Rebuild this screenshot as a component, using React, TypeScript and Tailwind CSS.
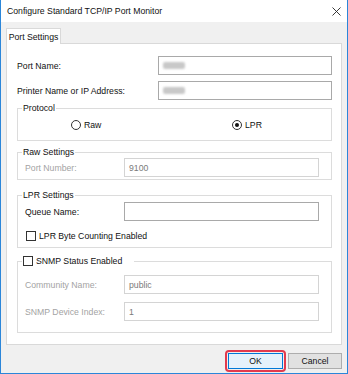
import React from "react";

const Blur = ({ w = 22 }: { w?: number }) => (
  <span
    className="block h-[7px] rounded-[2px] bg-[#c8c8c8] blur-[1.2px]"
    style={{ width: w }}
  />
);

const Field = ({
  children,
  disabled = false,
  className = "",
}: {
  children?: React.ReactNode;
  disabled?: boolean;
  className?: string;
}) => (
  <div
    className={`flex h-[19px] items-center border bg-white px-[4px] ${
      disabled ? "border-[#d4d4d4] text-[#7a7a7a]" : "border-[#a9a9a9]"
    } ${className}`}
  >
    {children}
  </div>
);

const Check = () => (
  <span className="inline-block h-[10px] w-[10px] shrink-0 border border-[#333] bg-white" />
);

const Radio = ({ on = false }: { on?: boolean }) => (
  <span className="inline-flex h-[10px] w-[10px] shrink-0 items-center justify-center rounded-full border border-[#333] bg-white">
    {on && <span className="h-[4px] w-[4px] rounded-full bg-[#111]" />}
  </span>
);

export default function App() {
  return (
    <div className="flex h-[374px] w-[348px] flex-col border-x border-b border-[#2b86d9] bg-[#f0f0f0] font-['Liberation_Sans',Arial,sans-serif] text-[8.7px] leading-[12px] text-[#111]">
      {/* Title bar */}
      <div className="flex h-[22px] shrink-0 items-center justify-between bg-white pl-[6px] pr-[6px]">
        <span>Configure Standard TCP/IP Port Monitor</span>
        <svg width="9" height="9" viewBox="0 0 9 9">
          <path d="M0.5 0.5 L8.5 8.5 M8.5 0.5 L0.5 8.5" stroke="#222" strokeWidth="0.9" />
        </svg>
      </div>

      <div className="flex flex-1 flex-col px-[5px] pt-[6px]">
        {/* Tab */}
        <div className="relative z-10 -mb-px flex h-[16px] w-[55px] items-center justify-center whitespace-nowrap border-x border-t border-[#d9d9d9] bg-white">
          Port Settings
        </div>

        {/* Panel */}
        <div className="flex h-[302px] flex-col border border-[#d9d9d9] bg-white pl-[10px] pr-[9px] pt-[12px]">
          <div className="flex items-center">
            <span className="w-[141px]">Port Name:</span>
            <Field className="flex-1">
              <Blur w={22} />
            </Field>
          </div>
          <div className="mt-[6px] flex items-center">
            <span className="w-[141px]">Printer Name or IP Address:</span>
            <Field className="flex-1">
              <Blur w={22} />
            </Field>
          </div>

          <fieldset className="mt-[2px] border border-[#dcdcdc] pb-[9px] pl-[7px] pr-[12px] pt-[5px]">
            <legend className="-ml-[3px] px-[1px]">Protocol</legend>
            <div className="flex h-[12px] items-center">
              <label className="ml-[46px] flex w-[161px] items-center gap-[3px]">
                <Radio />
                Raw
              </label>
              <label className="flex items-center gap-[3px]">
                <Radio on />
                LPR
              </label>
            </div>
          </fieldset>

          <fieldset className="mt-[5px] border border-[#dcdcdc] pb-[2px] pl-[7px] pr-[12px]">
            <legend className="-ml-[3px] px-[1px]">Raw Settings</legend>
            <div className="flex items-center">
              <span className="w-[99px] text-[#a3a3a3]">Port Number:</span>
              <Field disabled className="flex-1">
                9100
              </Field>
            </div>
          </fieldset>

          <fieldset className="mt-[9px] border border-[#dcdcdc] pb-[5px] pl-[7px] pr-[12px] pt-[1px]">
            <legend className="-ml-[3px] px-[1px]">LPR Settings</legend>
            <div className="flex items-center">
              <span className="w-[99px]">Queue Name:</span>
              <Field className="flex-1" />
            </div>
            <label className="mt-[9px] flex h-[12px] items-center gap-[3px] pl-[1px]">
              <Check />
              LPR Byte Counting Enabled
            </label>
          </fieldset>

          <fieldset className="mt-[7px] border border-[#dcdcdc] pb-[11px] pl-[7px] pr-[12px] pt-[8px]">
            <legend className="-ml-[3px] flex items-center gap-[3px] px-[1px] pr-[12px]">
              <Check />
              SNMP Status Enabled
            </legend>
            <div className="flex items-center">
              <span className="w-[99px] text-[#a3a3a3]">Community Name:</span>
              <Field disabled className="flex-1">
                public
              </Field>
            </div>
            <div className="mt-[8px] flex items-center">
              <span className="w-[99px] text-[#a3a3a3]">SNMP Device Index:</span>
              <Field disabled className="flex-1">
                1
              </Field>
            </div>
          </fieldset>
        </div>

        {/* Buttons */}
        <div className="mt-[5px] flex items-center justify-end gap-[2px]">
          <span className="rounded-[4px] border-2 border-[#e23a4e] p-px">
            <button className="flex h-[16px] w-[55px] items-center justify-center border border-[#0078d7] bg-[#e5f1fb]">
              OK
            </button>
          </span>
          <button className="flex h-[16px] w-[54px] items-center justify-center border border-[#adadad] bg-[#e1e1e1]">
            Cancel
          </button>
        </div>
      </div>
    </div>
  );
}
